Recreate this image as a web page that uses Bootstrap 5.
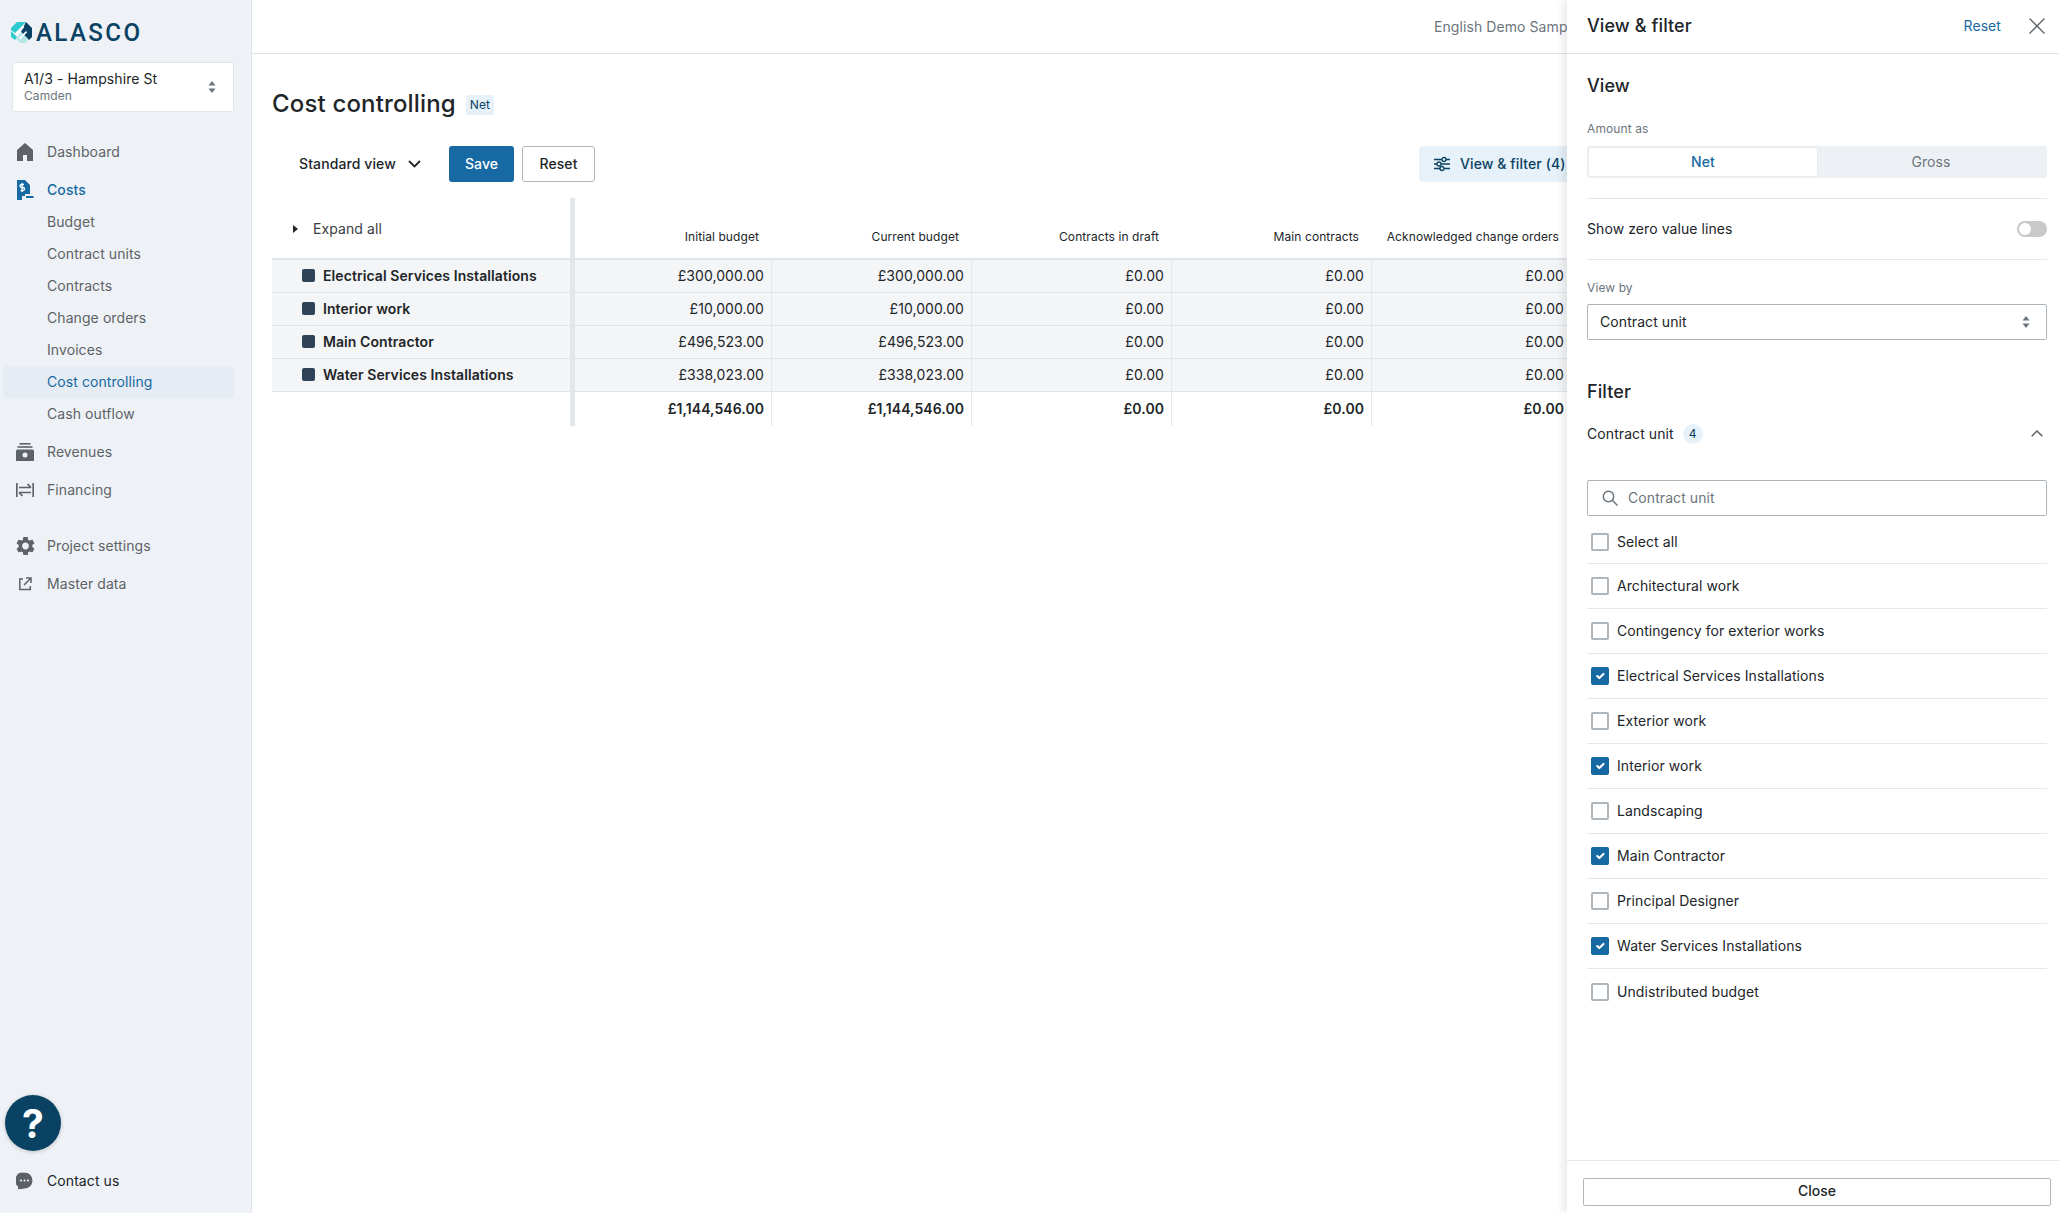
<!DOCTYPE html>
<html lang="en">
<head>
<meta charset="utf-8">
<title>Cost controlling</title>
<link rel="stylesheet" href="https://cdn.jsdelivr.net/npm/bootstrap@5.3.0/dist/css/bootstrap.min.css">
<style>
html,body{height:100%}
body{font-family:Inter,"Liberation Sans",sans-serif;font-size:14px;letter-spacing:.08px;color:#212529;overflow:hidden;background:#fff}
.app-shell{height:100vh;position:relative;overflow:hidden}
.side-bar{width:252px;flex:0 0 252px;background:#eef2f6;border-right:1px solid #e1e5ea}
.brand-row{height:62px;padding:22px 0 0 11px;gap:4px}
.brand-name{font-family:Roboto,"Liberation Sans",sans-serif;font-size:26.5px;line-height:20px;font-weight:500;letter-spacing:2.6px;color:#0a4263;display:inline-block;transform:scaleX(.91);transform-origin:left center}
.project-box{margin:0 17px 0 12px;height:50px;background:#fff;border:1px solid #e1e5ea;border-radius:2px;padding:0 17px 1px 11px}
.project-name{font-size:14px;line-height:18px}
.project-sub{font-size:12px;line-height:16px;color:#6c757d}
.side-nav{margin:18px 17px 0 3px}
.nav-entry{height:32px;padding:0 0 1px 44px;color:#5d6267;border-radius:3px;position:relative;display:flex;align-items:center;text-decoration:none}
.nav-main{margin-top:6px}
.nav-main svg{position:absolute;left:13px;top:50%;transform:translateY(-50%)}
.nav-entry.is-current{color:#1769a3}
.nav-entry.is-band{background:#e6ecf3}
.nav-gap{margin-top:24px}
.help-dot{width:56px;height:56px;margin-left:5px;border-radius:50%;background:#0a4263;color:#fff;font-size:39px;font-weight:700;line-height:1;box-shadow:0 1px 4px rgba(0,0,0,.2)}
.contact-row{margin:14px 17px 16px 3px;color:#212529}
.content-area{min-width:0;overflow:hidden}
.top-strip{height:54px;border-bottom:1px solid #dee2e6;padding:0 0 1px 1182px;color:#6c757d;white-space:nowrap;overflow:hidden}
.page-body{padding-left:20px}
.title-row{margin-top:33px;height:32px}
.page-title{font-size:24px;line-height:32px;font-weight:500;margin:2px 0 0;letter-spacing:.16px}
.net-tag{background:#e6f1f9;color:#0a4263;font-size:12px;font-weight:400;line-height:20px;height:20px;width:28px;text-align:center;border-radius:2px;margin-left:10px;margin-top:4px}
.tool-row{margin-top:27px;height:36px}
.btn-std{font-size:14px;height:36px;padding:0 0 1px;border-radius:3px;font-weight:500;letter-spacing:.1px}
.view-picker{width:169px;padding-left:27px;color:#212529;border:0;gap:12px;font-weight:500;background:none;justify-content:flex-start}
.btn-save{width:65px;background:#1769a3;color:#fff;border:0;margin-left:8px}
.btn-save:hover{background:#1769a3;color:#fff}
.btn-plain{width:73px;background:#fff;border:1px solid #adb5bd;color:#212529;margin-left:8px}
.btn-filter{position:absolute;left:1419px;top:146px;width:180px;background:#e6f1f9;color:#0a4263;border:0;text-align:left;padding-left:15px;gap:10px;justify-content:flex-start}
.grid-wrap{margin-top:16px;width:1295px;overflow:hidden}
.cost-grid{table-layout:fixed;width:1300px;border-collapse:separate;border-spacing:0;margin:0;color:#212529;letter-spacing:.06px}
.cost-grid th,.cost-grid td{padding:0 7px 1px 0;text-align:right;font-weight:400;vertical-align:middle;white-space:nowrap;border:0;box-shadow:none}
.cost-grid thead th{height:62px;border-bottom:2px solid #e1e5ea;font-size:12px;letter-spacing:.08px;padding:18px 13px 0 0;background:#fff}
.cost-grid tbody td{height:33px;background:#f4f5f7;border-bottom:1px solid #e1e5ea;border-right:1px solid #e4e7eb}
.cost-grid tbody tr:last-child td{background:#fff;border-bottom:0;font-weight:600;height:34px}
.cost-grid .stick-col{text-align:left;border-right:5px solid #e3e7eb;padding:0}
.cost-grid thead th.stick-col{font-size:14px;letter-spacing:.08px;color:#3b4046;padding:20px 0 0 21px;border-right:5px solid #e3e7eb;vertical-align:top}
.cost-grid tbody td.stick-col{font-weight:600;padding:0 0 1px 30px;letter-spacing:.08px;border-right:5px solid #e3e7eb}
.cost-grid tbody tr:last-child td.stick-col{background:#fff}
.expand-mark{display:inline-block;width:0;height:0;border-left:5px solid #212529;border-top:4px solid transparent;border-bottom:4px solid transparent;margin-right:15px;vertical-align:1px}
.row-chip{display:inline-block;width:13px;height:13px;background:#2f4358;border-radius:2px;margin-right:8px;vertical-align:-1px}
.drawer{position:absolute;left:1567px;top:0;bottom:0;width:492px;background:#fff;box-shadow:-4px 0 8px rgba(0,0,0,.09);z-index:5}
.drawer-head{height:54px;border-bottom:1px solid #dee2e6;padding:0 14px 2px 20px}
.drawer-title{font-size:18px;font-weight:500;margin:0;line-height:24px;letter-spacing:.1px}
.drawer-reset{color:#1769a3;text-decoration:none;margin-right:28px}
.drawer-body{padding:0 12px 0 20px}
.sec-head{font-size:18px;font-weight:500;line-height:24px;margin:0;letter-spacing:.1px}
.mini-label{font-size:12px;line-height:16px;color:#6c757d;letter-spacing:.1px}
.seg-box{height:32px;background:#edf1f5;border-radius:2px;padding:2px;margin-top:9px}
.seg-on{width:228px;background:#fff;color:#1769a3;font-weight:500;border-radius:2px;box-shadow:0 0 2px rgba(0,0,0,.08);padding-bottom:1px}
.seg-off{color:#6c757d;padding-bottom:1px}
.thin-rule{height:1px;background:#e4e7eb}
.zero-row{height:60px}
.zero-label{margin-top:-1px}
.zero-switch{margin:0;padding:0;min-height:0;height:16px}
.zero-switch .form-check-input{width:30px;height:16px;margin:0;float:none;display:block;background-color:#c9c9c9;border:0;--bs-form-switch-bg:none;background-image:url("data:image/svg+xml,%3csvg xmlns='http://www.w3.org/2000/svg' viewBox='-4 -4 8 8'%3e%3ccircle r='3' fill='%23fff'/%3e%3c/svg%3e")}
.field-box{height:36px;border:1px solid #adb5bd;border-radius:2px;font-size:14px;letter-spacing:.08px;color:#212529;padding:0 12px 1px;box-shadow:none}
select.field-box{background-image:url("data:image/svg+xml,%3csvg xmlns='http://www.w3.org/2000/svg' viewBox='0 0 8 12'%3e%3cpath d='M4 0 7.500 4.500H.5zM4 12 .5 7.500h7z' fill='%236c757d'/%3e%3c/svg%3e");background-size:8px 12px;background-position:right 16px center;margin-top:8px}
.search-wrap{position:relative;margin-top:24px}
.search-wrap svg{position:absolute;left:15px;top:10px}
.search-wrap input{padding-left:40px}
.search-wrap input::placeholder{color:#6c757d;opacity:1}
.unit-pill{width:20px;height:20px;border-radius:50%;background:#e6f1f9;color:#0a4263;font-size:12px;margin-left:9px}
.unit-head{height:44px;margin-top:8px;padding:0 4px 1px 0}
.pick-list{margin-top:4px}
.pick-row{height:45px;border:0;border-bottom:1px solid #e4e7eb;padding:0 0 0 4px;border-radius:0;margin:0;gap:8px;letter-spacing:.08px}
.pick-row:first-child{height:44px}
.pick-row .form-check-input{width:18px;height:18px;margin:0;border:2px solid #adb5bd;border-radius:2px;flex:none}
.pick-row .form-check-input:checked{background-color:#1769a3;border-color:#1769a3}
.pick-text{margin-top:-1px}
.drawer-foot{height:53px;border-top:1px solid #e4e7eb;padding:17px 8px 0 16px}
.close-btn{height:28px;width:468px;border:1px solid #adb5bd;border-radius:2px;background:#fff;color:#212529;font-weight:500;font-size:14px;padding:0 0 2px;line-height:1}
</style>
</head>
<body>
<div class="app-shell d-flex">
  <aside class="side-bar d-flex flex-column">
    <div class="brand-row d-flex align-items-start">
      <svg width="21" height="21" viewBox="0 0 21 21">
        <path d="M6 0h9l-2 2-9 9-4-3V6z" fill="#2ccbd0"/>
        <path d="M15 0l6 6v9l-3 3-8-8z" fill="#0a4263"/>
        <path d="M10 10l7 7-2 4H9l-4-4z" fill="#b7e6e8"/>
        <path d="M0 9l6 6-2 3-4-3z" fill="#2ccbd0"/>
        <path d="M4 12l8-8 1.300 1.300-8 8zM8 16l7-7 1.200 1.200-7 7z" fill="#fff"/>
      </svg>
      <span class="brand-name">ALASCO</span>
    </div>
    <div class="project-box d-flex align-items-center justify-content-between">
      <div>
        <div class="project-name">A1/3 - Hampshire St</div>
        <div class="project-sub">Camden</div>
      </div>
      <svg width="8" height="12" viewBox="0 0 8 12"><path d="M4 0l3.500 4.500H.5zM4 12 .5 7.500h7z" fill="#6c757d"/></svg>
    </div>
    <nav class="side-nav nav flex-column flex-nowrap">
      <a class="nav-entry nav-main" href="#">
        <svg width="18" height="18" viewBox="0 0 18 18"><path d="M9 0l8 7v11h-6v-6H7v6H1V7z" fill="#5d6267"/></svg>Dashboard</a>
      <a class="nav-entry nav-main is-current fw-medium" href="#">
        <svg width="18" height="20" viewBox="0 0 18 20"><path d="M1 0h8l5 5v9H9v2H6v4H1z" fill="#1769a3"/><path d="M8 4.500H5.500a1.500 1.500 0 0 0 0 3h1.500a1.500 1.500 0 0 1 0 3H4.500M6.200 3v9" fill="none" stroke="#fff" stroke-width="1.300"/><rect x="10" y="16" width="7.500" height="2" fill="#1769a3"/></svg>Costs</a>
      <a class="nav-entry" href="#">Budget</a>
      <a class="nav-entry" href="#">Contract units</a>
      <a class="nav-entry" href="#">Contracts</a>
      <a class="nav-entry" href="#">Change orders</a>
      <a class="nav-entry" href="#">Invoices</a>
      <a class="nav-entry is-current is-band" href="#">Cost controlling</a>
      <a class="nav-entry" href="#">Cash outflow</a>
      <a class="nav-entry nav-main" href="#">
        <svg width="18" height="18" viewBox="0 0 18 18"><rect x="3.500" y="0" width="11" height="1.600" fill="#5d6267"/><rect x="1.500" y="3.200" width="15" height="1.600" fill="#5d6267"/><path d="M1.500 6.500h15a1.500 1.500 0 0 1 1.500 1.500v10H0V8a1.500 1.500 0 0 1 1.500-1.500z" fill="#5d6267"/><circle cx="9" cy="12" r="2.500" fill="#eef2f6"/></svg>Revenues</a>
      <a class="nav-entry nav-main" href="#">
        <svg width="18" height="16" viewBox="0 0 18 16" fill="none" stroke="#5d6267" stroke-width="1.700"><path d="M.8 1v14M17.200 1v14M3 5.500h12M11.500 2l3.500 3.500M15 10.500H3M6.500 14 3 10.500"/></svg>Financing</a>
      <a class="nav-entry nav-main nav-gap" href="#">
        <svg width="19" height="19" viewBox="2 2 20 20"><path fill="#5d6267" d="M19.140 12.940c.04-.3.06-.61.06-.94 0-.32-.02-.64-.07-.94l2.030-1.580c.18-.14.23-.41.12-.61l-1.920-3.320c-.12-.22-.37-.29-.59-.22l-2.390.96c-.5-.38-1.030-.7-1.620-.94l-.36-2.540c-.04-.24-.24-.41-.48-.41h-3.840c-.24 0-.43.17-.47.41l-.36 2.540c-.59.24-1.130.57-1.620.94l-2.390-.96c-.22-.08-.47 0-.59.22L2.740 8.870c-.12.21-.08.47.12.61l2.030 1.580c-.05.3-.07.62-.07.94s.02.64.07.94l-2.030 1.580c-.18.14-.23.41-.12.61l1.920 3.320c.12.22.37.29.59.22l2.390-.96c.5.38 1.030.7 1.620.94l.36 2.540c.05.24.24.41.48.41h3.840c.24 0 .44-.17.47-.41l.36-2.540c.59-.24 1.130-.56 1.620-.94l2.390.96c.22.08.47 0 .59-.22l1.920-3.320c.12-.22.07-.47-.12-.61l-2.010-1.580zM12 15.600c-1.980 0-3.600-1.620-3.600-3.600s1.620-3.600 3.600-3.600 3.600 1.620 3.600 3.600-1.620 3.600-3.600 3.600z"/></svg>Project settings</a>
      <a class="nav-entry nav-main" href="#">
        <svg width="18" height="14" viewBox="0 0 18 14" fill="none" stroke="#5d6267" stroke-width="1.500"><path d="M7 2H3.800v10.500h10.500V9M10 1h5v5M15 1 8 8"/></svg>Master data</a>
    </nav>
    <div class="help-dot mt-auto d-flex align-items-center justify-content-center">?</div>
    <a class="nav-entry nav-main contact-row" href="#">
      <svg width="17" height="17" viewBox="0 0 17 17"><path d="M8.500 0a8 8 0 0 1 0 16c-1.500 0-5 1-7 1 .5-1 1-2 .5-3A8 8 0 0 1 8.500 0z" fill="#5d6267"/><circle cx="5" cy="8" r="1" fill="#fff"/><circle cx="8.500" cy="8" r="1" fill="#fff"/><circle cx="12" cy="8" r="1" fill="#fff"/></svg>Contact us</a>
  </aside>

  <main class="content-area flex-grow-1">
    <div class="top-strip d-flex align-items-center">English Demo Sample</div>
    <div class="page-body">
      <div class="title-row d-flex align-items-center">
        <h1 class="page-title">Cost controlling</h1>
        <span class="net-tag">Net</span>
      </div>
      <div class="tool-row d-flex align-items-center">
        <button class="btn btn-std view-picker d-flex align-items-center" type="button">Standard view
          <svg width="13" height="8" viewBox="0 0 13 8" fill="none" stroke="#212529" stroke-width="1.800"><path d="M1 1l5.500 5.500L12 1"/></svg>
        </button>
        <button class="btn btn-std btn-save" type="button">Save</button>
        <button class="btn btn-std btn-plain" type="button">Reset</button>
        <button class="btn btn-std btn-filter d-flex align-items-center" type="button">
          <svg width="16" height="16" viewBox="0 0 16 16" fill="none" stroke="#0a4263" stroke-width="1.300"><path d="M0 3.500h8M12 3.500h4M0 8h3M7 8h9M0 12.500h6M10 12.500h6"/><circle cx="10" cy="3.500" r="2"/><circle cx="5" cy="8" r="2"/><circle cx="8" cy="12.500" r="2"/></svg>
          View &amp; filter (4)
        </button>
      </div>
      <div class="grid-wrap">
        <table class="table cost-grid">
          <colgroup><col style="width:303px"><col style="width:197px"><col style="width:200px"><col style="width:200px"><col style="width:200px"><col style="width:200px"></colgroup>
          <thead>
            <tr>
              <th class="stick-col"><span class="expand-mark"></span>Expand all</th>
              <th>Initial budget</th><th>Current budget</th><th>Contracts in draft</th><th>Main contracts</th><th>Acknowledged change orders</th>
            </tr>
          </thead>
          <tbody>
            <tr><td class="stick-col"><span class="row-chip"></span>Electrical Services Installations</td><td>£300,000.00</td><td>£300,000.00</td><td>£0.00</td><td>£0.00</td><td>£0.00</td></tr>
            <tr><td class="stick-col"><span class="row-chip"></span>Interior work</td><td>£10,000.00</td><td>£10,000.00</td><td>£0.00</td><td>£0.00</td><td>£0.00</td></tr>
            <tr><td class="stick-col"><span class="row-chip"></span>Main Contractor</td><td>£496,523.00</td><td>£496,523.00</td><td>£0.00</td><td>£0.00</td><td>£0.00</td></tr>
            <tr><td class="stick-col"><span class="row-chip"></span>Water Services Installations</td><td>£338,023.00</td><td>£338,023.00</td><td>£0.00</td><td>£0.00</td><td>£0.00</td></tr>
            <tr><td class="stick-col"></td><td>£1,144,546.00</td><td>£1,144,546.00</td><td>£0.00</td><td>£0.00</td><td>£0.00</td></tr>
          </tbody>
        </table>
      </div>
    </div>
  </main>

  <section class="drawer d-flex flex-column">
    <div class="drawer-head d-flex align-items-center">
      <h2 class="drawer-title me-auto">View &amp; filter</h2>
      <a class="drawer-reset" href="#">Reset</a>
      <svg width="16" height="16" viewBox="0 0 16 16" fill="none" stroke="#5d6267" stroke-width="1.300"><path d="M.5.5l15 15M15.500.5l-15 15"/></svg>
    </div>
    <div class="drawer-body flex-grow-1">
      <h3 class="sec-head" style="margin-top:20px">View</h3>
      <div class="mini-label" style="margin-top:23px">Amount as</div>
      <div class="seg-box d-flex">
        <div class="seg-on d-flex align-items-center justify-content-center">Net</div>
        <div class="seg-off flex-grow-1 d-flex align-items-center justify-content-center">Gross</div>
      </div>
      <div class="thin-rule" style="margin-top:20px"></div>
      <div class="zero-row d-flex align-items-center justify-content-between">
        <span class="zero-label">Show zero value lines</span>
        <div class="form-check form-switch zero-switch"><input class="form-check-input" type="checkbox" role="switch" aria-label="Show zero value lines"></div>
      </div>
      <div class="thin-rule"></div>
      <div class="mini-label" style="margin-top:20px">View by</div>
      <select class="form-select field-box" aria-label="View by"><option>Contract unit</option></select>
      <h3 class="sec-head" style="margin-top:40px">Filter</h3>
      <div class="unit-head d-flex align-items-center">
        <span>Contract unit</span><span class="unit-pill d-flex align-items-center justify-content-center">4</span>
        <svg class="ms-auto" width="12" height="7" viewBox="0 0 12 7" fill="none" stroke="#5d6267" stroke-width="1.500"><path d="M.7 6.300 6 1l5.300 5.300"/></svg>
      </div>
      <div class="search-wrap">
        <svg width="16" height="16" viewBox="0 0 16 16" fill="none" stroke="#6c757d" stroke-width="1.500"><circle cx="6.500" cy="6.500" r="5.200"/><path d="M10.300 10.300 15.500 15.500"/></svg>
        <input class="form-control field-box" type="text" placeholder="Contract unit" aria-label="Contract unit">
      </div>
      <div class="list-group list-group-flush pick-list">
        <label class="list-group-item pick-row d-flex align-items-center"><input class="form-check-input" type="checkbox"><span class="pick-text">Select all</span></label>
        <label class="list-group-item pick-row d-flex align-items-center"><input class="form-check-input" type="checkbox"><span class="pick-text">Architectural work</span></label>
        <label class="list-group-item pick-row d-flex align-items-center"><input class="form-check-input" type="checkbox"><span class="pick-text">Contingency for exterior works</span></label>
        <label class="list-group-item pick-row d-flex align-items-center"><input class="form-check-input" type="checkbox" checked><span class="pick-text">Electrical Services Installations</span></label>
        <label class="list-group-item pick-row d-flex align-items-center"><input class="form-check-input" type="checkbox"><span class="pick-text">Exterior work</span></label>
        <label class="list-group-item pick-row d-flex align-items-center"><input class="form-check-input" type="checkbox" checked><span class="pick-text">Interior work</span></label>
        <label class="list-group-item pick-row d-flex align-items-center"><input class="form-check-input" type="checkbox"><span class="pick-text">Landscaping</span></label>
        <label class="list-group-item pick-row d-flex align-items-center"><input class="form-check-input" type="checkbox" checked><span class="pick-text">Main Contractor</span></label>
        <label class="list-group-item pick-row d-flex align-items-center"><input class="form-check-input" type="checkbox"><span class="pick-text">Principal Designer</span></label>
        <label class="list-group-item pick-row d-flex align-items-center"><input class="form-check-input" type="checkbox" checked><span class="pick-text">Water Services Installations</span></label>
        <label class="list-group-item pick-row d-flex align-items-center"><input class="form-check-input" type="checkbox"><span class="pick-text">Undistributed budget</span></label>
      </div>
    </div>
    <div class="drawer-foot"><button class="btn close-btn" type="button">Close</button></div>
  </section>
</div>
<script src="https://cdn.jsdelivr.net/npm/bootstrap@5.3.0/dist/js/bootstrap.bundle.min.js"></script>
</body>
</html>
